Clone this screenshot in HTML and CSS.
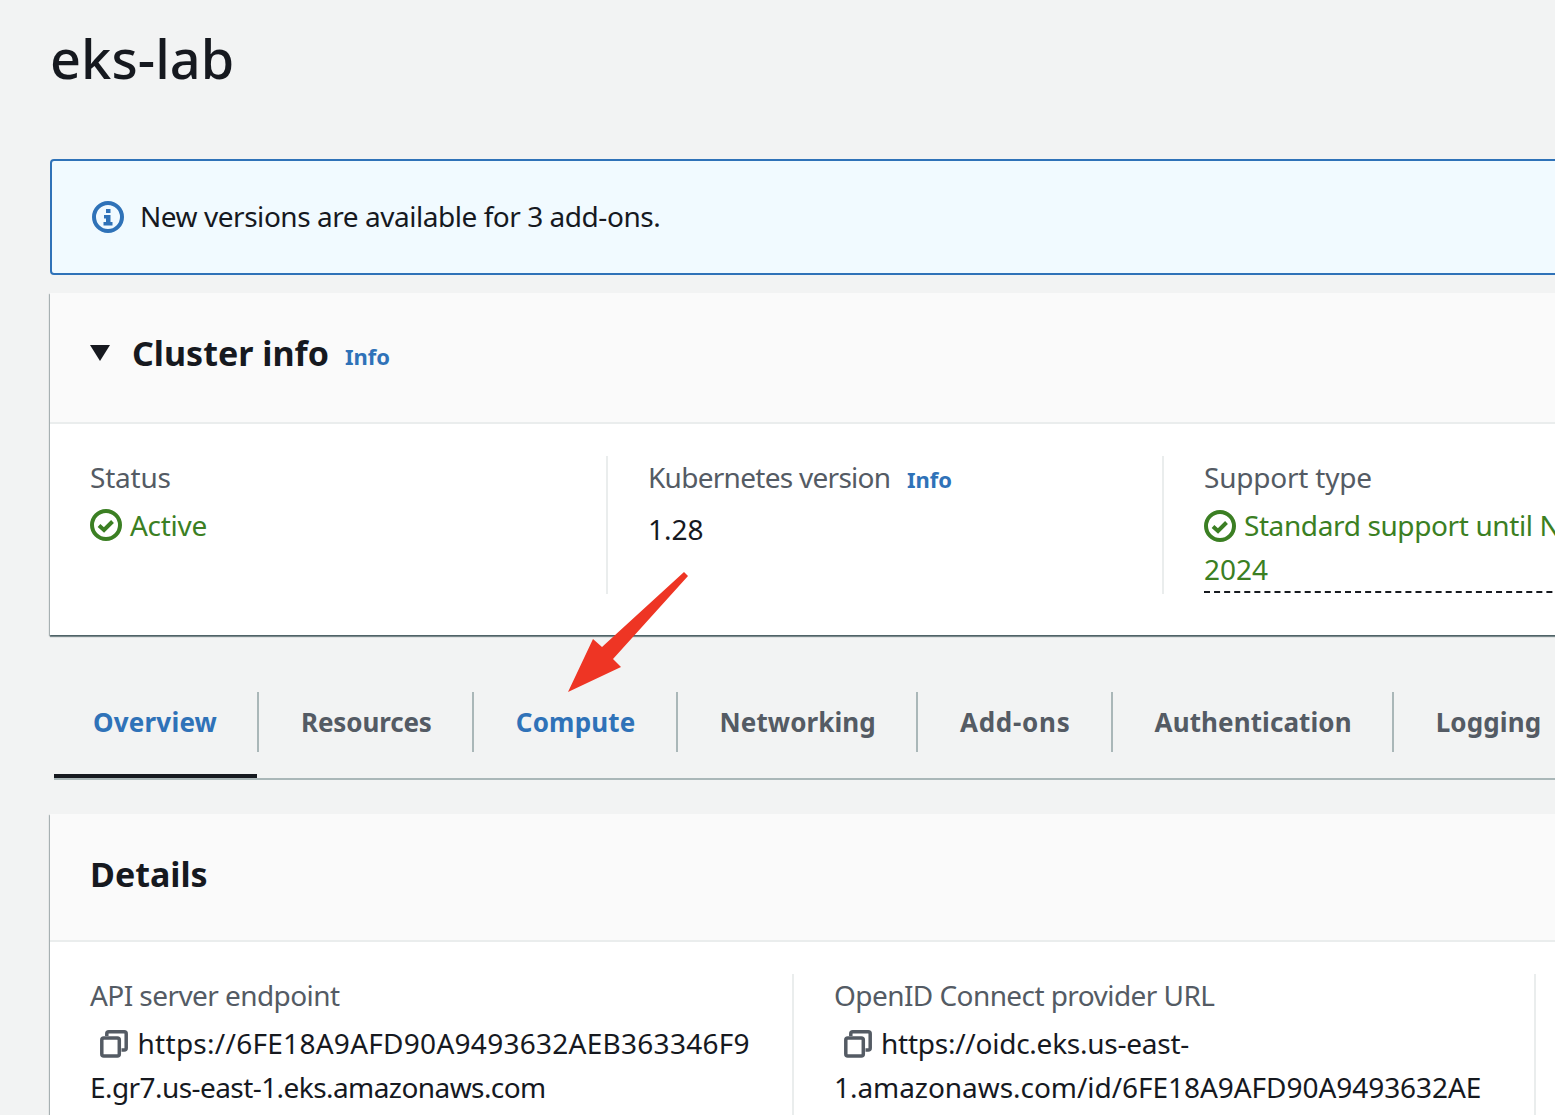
FILE: index.html
```html
<!DOCTYPE html>
<html lang="en">
<head>
  <meta charset="UTF-8" />
  <meta name="viewport" content="width=device-width, initial-scale=1" />
  <title>eks-lab</title>
  <link rel="stylesheet" href="styles.css">
</head>
<body>
  <main class="page">
    <h1 class="page-title">eks-lab</h1>

    <div class="alert">
      <svg class="icon" viewBox="0 0 32 32">
        <circle cx="16" cy="16" r="14" fill="none" stroke="#2f72b8" stroke-width="4"/>
        <rect x="14" y="8" width="4.500" height="4" fill="#2f72b8"/>
        <path d="M12 14h6.500v7h2v3.500h-9V21h2.500v-3.500H12z" fill="#2f72b8"/>
      </svg>
      <span class="alert-text">New versions are available for 3 add-ons.</span>
    </div>

    <section class="card cluster">
      <header class="card-head cluster-head">
        <svg class="caret" viewBox="0 0 20 16"><polygon points="0 0 20 0 10 16" fill="#16191f"/></svg>
        <h2 class="card-title">Cluster info</h2>
        <a class="info-link">Info</a>
      </header>
      <div class="card-body cluster-cols">
        <div class="col">
          <div class="label">Status</div>
          <div class="status">
            <svg class="icon" viewBox="0 0 32 32">
              <circle cx="16" cy="16" r="14" fill="none" stroke="#3b7f23" stroke-width="4"/>
              <path d="M9 16.500l5 4.500 8.500-8.500" fill="none" stroke="#3b7f23" stroke-width="4"/>
            </svg>
            <span>Active</span>
          </div>
        </div>
        <div class="col">
          <div class="label label-k8s">Kubernetes version <a class="info-link label-info">Info</a></div>
          <div class="version">1.28</div>
        </div>
        <div class="col col-last">
          <div class="label">Support type</div>
          <div class="status support">
            <svg class="icon icon-inline" viewBox="0 0 32 32">
              <circle cx="16" cy="16" r="14" fill="none" stroke="#3b7f23" stroke-width="4"/>
              <path d="M9 16.500l5 4.500 8.500-8.500" fill="none" stroke="#3b7f23" stroke-width="4"/>
            </svg>
            Standard support until November<br><span class="support-year">2024</span>
          </div>
        </div>
      </div>
    </section>

    <nav class="tabs">
      <a class="tab active">Overview</a>
      <a class="tab tab-resources">Resources</a>
      <a class="tab tab-hover">Compute</a>
      <a class="tab">Networking</a>
      <a class="tab tab-addons">Add-ons</a>
      <a class="tab">Authentication</a>
      <a class="tab tab-end">Logging</a>
    </nav>

    <section class="card details">
      <header class="card-head details-head">
        <h2 class="card-title">Details</h2>
      </header>
      <div class="card-body details-cols">
        <div class="col">
          <div class="label label-long">API server endpoint</div>
          <div class="endpoint">
            <span class="line line-hex">
              <svg class="copy" viewBox="0 0 28 28">
                <path d="M6.800 6V3.800a2 2 0 0 1 2-2H24.200a2 2 0 0 1 2 2V18a2 2 0 0 1-2 2H21.500" fill="none" stroke="#545b64" stroke-width="3.500"/>
                <rect x="1.800" y="8" width="17.500" height="18" rx="2" fill="none" stroke="#545b64" stroke-width="3.500"/>
              </svg>
              https://6FE18A9AFD90A9493632AEB363346F9
            </span>
            <span class="line line-host">E.gr7.us-east-1.eks.amazonaws.com</span>
          </div>
        </div>
        <div class="col">
          <div class="label label-long">OpenID Connect provider URL</div>
          <div class="endpoint">
            <span class="line line-oidc">
              <svg class="copy" viewBox="0 0 28 28">
                <path d="M6.800 6V3.800a2 2 0 0 1 2-2H24.200a2 2 0 0 1 2 2V18a2 2 0 0 1-2 2H21.500" fill="none" stroke="#545b64" stroke-width="3.500"/>
                <rect x="1.800" y="8" width="17.500" height="18" rx="2" fill="none" stroke="#545b64" stroke-width="3.500"/>
              </svg>
              https://oidc.eks.us-east-
            </span>
            <span class="line line-mixed">1.amazonaws.com/id/6FE18A9AFD90A9493632AE</span>
          </div>
        </div>
      </div>
    </section>
  </main>

  <!-- annotation drawn over the screenshot -->
  <svg class="arrow" viewBox="0 0 1555 1115">
    <polygon points="684 572 688 576 613 659 621 667 568 692 593 639 602 647" fill="#ee3524"/>
  </svg>
</body>
</html>
```

FILE: styles.css
```css
:root {
  --bg-color: #f2f3f3;
  --text-color: #16191f;
  --muted-color: #545b64;
  --link-color: #2f72b8;
  --green: #3b7f23;
  --line-color: #eaeded;
}

html, body {
  height: 100%;
  overflow: hidden;
}

body {
  margin: 0;
  position: relative;
  background-color: var(--bg-color);
  color: var(--text-color);
  font-family: "Noto Sans", "Open Sans", sans-serif;
  font-size: 28px;
  line-height: 44px;
}

.page {
  width: 1760px;
  padding-left: 50px;
}

.page-title {
  margin: 0;
  padding-top: 22px;
  height: 159px;
  box-sizing: border-box;
  font-size: 54px;
  line-height: 72px;
  font-weight: 500;
  letter-spacing: 0.1px;
}

.alert {
  display: flex;
  align-items: center;
  gap: 16px;
  height: 116px;
  box-sizing: border-box;
  padding-left: 40px;
  background-color: #f1faff;
  border: 2px solid var(--link-color);
  border-radius: 4px;
}

.alert-text {
  letter-spacing: -0.46px;
  margin-bottom: 2px;
}

.icon {
  width: 32px;
  height: 32px;
  flex-shrink: 0;
}

.card {
  background-color: #fff;
  box-shadow: 0 2px 1px 0 rgba(0, 28, 36, 0.45), 1px 1px 1px 0 rgba(0, 28, 36, 0.2), -1px 1px 1px 0 rgba(0, 28, 36, 0.25);
}

.cluster {
  margin-top: 18px;
  height: 342px;
}

.card-head {
  display: flex;
  align-items: center;
  box-sizing: border-box;
  padding-left: 40px;
  background-color: #fafafa;
  border-bottom: 2px solid var(--line-color);
}

.cluster-head {
  height: 131px;
  padding-bottom: 10px;
}

.details-head {
  height: 128px;
  padding-bottom: 6px;
}

.caret {
  width: 20px;
  height: 16px;
  margin-right: 22px;
}

.card-title {
  margin: 0;
  font-size: 34px;
  line-height: 52px;
  font-weight: 700;
}

.info-link {
  color: var(--link-color);
  font-weight: 700;
  font-size: 22px;
}

.cluster-head .info-link {
  margin-left: 16px;
  margin-top: 6px;
}

.label-info {
  margin-left: 10px;
  letter-spacing: 0;
}

.card-body {
  display: grid;
  padding-top: 32px;
}

.cluster-cols {
  grid-template-columns: 558px 556px 650px;
}

.details-cols {
  grid-template-columns: 744px 742px;
}

.col {
  box-sizing: border-box;
  padding-left: 40px;
  padding-right: 30px;
  border-right: 2px solid var(--line-color);
}

.col-last {
  border-right: none;
}

.cluster-cols .col {
  height: 138px;
}

.label {
  margin-top: -1px;
  color: var(--muted-color);
  line-height: 44px;
  letter-spacing: -0.22px;
}

.label-k8s {
  letter-spacing: -0.72px;
}

.label-long {
  letter-spacing: -0.57px;
}

.status {
  display: flex;
  align-items: center;
  gap: 8px;
  margin-top: 4px;
  color: var(--green);
  letter-spacing: -0.3px;
}

.support {
  display: block;
  border-bottom: 2px dashed #16191f;
  height: 88px;
  white-space: nowrap;
  letter-spacing: -0.38px;
}

.support-year {
  letter-spacing: 0;
}

.icon-inline {
  vertical-align: -6px;
  margin-right: 1px;
}

.version {
  margin-top: 6px;
}

.tabs {
  display: flex;
  align-items: center;
  margin-top: 57px;
  margin-left: 4px;
  height: 88px;
  border-bottom: 2px solid #aab7b8;
  box-sizing: border-box;
}

.tab {
  position: relative;
  display: flex;
  align-items: center;
  height: 60px;
  margin-top: -26px;
  padding: 0 40px 0 42px;
  color: var(--muted-color);
  font-size: 26px;
  font-weight: 700;
  letter-spacing: 0.1px;
  border-right: 2px solid #aab7b8;
}

.tab-resources {
  letter-spacing: -0.13px;
}

.tab-addons {
  letter-spacing: 0.75px;
}

.tab-hover {
  color: var(--link-color);
  letter-spacing: 0.2px;
}

.tab-end {
  border-right: none;
}

.active {
  padding-left: 39px;
  color: var(--link-color);
  letter-spacing: 0.2px;
}

.active::after {
  content: "";
  position: absolute;
  left: 0;
  right: 0;
  top: 82px;
  height: 4px;
  background-color: #16191f;
}

.details {
  margin-top: 34px;
  min-height: 400px;
}

.endpoint {
  margin-top: 4px;
}

.line {
  display: block;
  white-space: nowrap;
}

.line-hex {
  letter-spacing: 0.27px;
}

.line-host {
  letter-spacing: -0.57px;
}

.line-oidc {
  letter-spacing: -0.25px;
}

.line-mixed {
  letter-spacing: -0.05px;
}

.copy {
  width: 28px;
  height: 28px;
  margin-left: 10px;
  margin-right: 2px;
  vertical-align: -4px;
}

.details-cols .col {
  height: 300px;
}

.arrow {
  position: absolute;
  left: 0;
  top: 0;
  width: 1555px;
  height: 1115px;
  pointer-events: none;
}
```
